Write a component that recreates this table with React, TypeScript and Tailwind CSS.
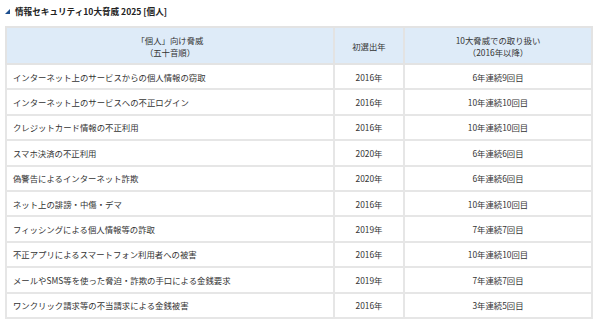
import React from 'react';

const rows = [
  { threat: 'インターネット上のサービスからの個人情報の窃取', year: '2016年', count: '6年連続9回目' },
  { threat: 'インターネット上のサービスへの不正ログイン', year: '2016年', count: '10年連続10回目' },
  { threat: 'クレジットカード情報の不正利用', year: '2016年', count: '10年連続10回目' },
  { threat: 'スマホ決済の不正利用', year: '2020年', count: '6年連続6回目' },
  { threat: '偽警告によるインターネット詐欺', year: '2020年', count: '6年連続6回目' },
  { threat: 'ネット上の誹謗・中傷・デマ', year: '2016年', count: '10年連続10回目' },
  { threat: 'フィッシングによる個人情報等の詐取', year: '2019年', count: '7年連続7回目' },
  { threat: '不正アプリによるスマートフォン利用者への被害', year: '2016年', count: '10年連続10回目' },
  { threat: 'メールやSMS等を使った脅迫・詐欺の手口による金銭要求', year: '2019年', count: '7年連続7回目' },
  { threat: 'ワンクリック請求等の不当請求による金銭被害', year: '2016年', count: '3年連続5回目' },
];

export default function App() {
  return <div className="w-[600px] h-[323px] bg-white text-[#333] overflow-hidden" style={{ fontFamily: '"Noto Sans CJK JP", "Noto Sans", sans-serif' }}>
      <div className="flex items-center h-[21px] pl-[5px] pt-[1px]">
        <svg width="5" height="5" viewBox="0 0 5 5" className="mr-[5px] mt-[1px]">
          <polygon points="5,0 5,5 0,5" fill="#1d4f8f" />
        </svg>
        <h1 className="text-[8.6px] font-bold text-[#222] leading-none">情報セキュリティ10大脅威 2025 [個人]</h1>
      </div>
      <table className="ml-[5px] mt-[5px] w-[588px] table-fixed border-collapse text-[8.4px] leading-[12px]">
        <colgroup>
          <col className="w-[328px]" />
          <col className="w-[70px]" />
          <col />
        </colgroup>
        <thead>
          <tr className="h-[37px] bg-[#deebf8]">
            <th className="border-2 border-[#e3e3e3] font-normal text-center">「個人」向け脅威<br />（五十音順）</th>
            <th className="border-2 border-[#e3e3e3] font-normal text-center">初選出年</th>
            <th className="border-2 border-[#e3e3e3] font-normal text-center">10大脅威での取り扱い<br />（2016年以降）</th>
          </tr>
        </thead>
        <tbody>
          {rows.map(row => <tr key={row.threat} className="h-[25.4px]">
              <td className="border-2 border-[#e6e6e6] pl-[6px]">{row.threat}</td>
              <td className="border-2 border-[#e6e6e6] text-center">{row.year}</td>
              <td className="border-2 border-[#e6e6e6] text-center">{row.count}</td>
            </tr>)}
        </tbody>
      </table>
    </div>;
}
